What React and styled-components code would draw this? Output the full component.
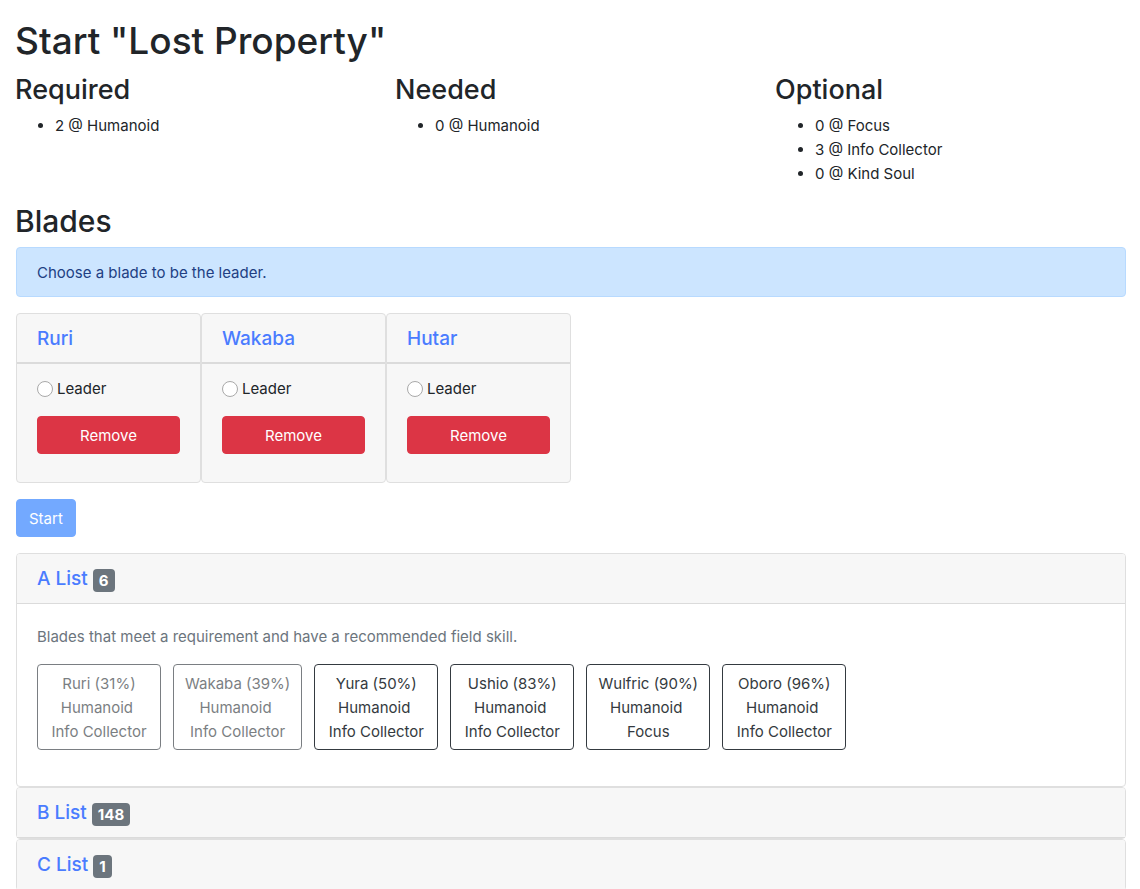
import React, { useState } from "react";
import styled, { createGlobalStyle } from "styled-components";

const GlobalStyle = createGlobalStyle`
  *, *::before, *::after { box-sizing: border-box; }
  body {
    margin: 0;
    background: #fff;
    color: #212529;
    font-family: Inter, "Liberation Sans", sans-serif;
    font-size: 15px;
    line-height: 24px;
  }
  h1, h2, h3, p, ul { margin: 0; }
  button { font: inherit; }
`;

const Page = styled.main`
  padding: 17px 14px 0 15px;
`;

const Title = styled.h1`
  font-size: 37px;
  line-height: 48px;
  font-weight: 500;
  margin-bottom: 8px;
`;

const Requirements = styled.div`
  display: grid;
  grid-template-columns: repeat(3, 1fr);
  column-gap: 15px;
  margin-right: -14px;
  margin-bottom: 16px;
`;

const GroupTitle = styled.h3`
  font-size: 27px;
  line-height: 33px;
  font-weight: 500;
  margin-bottom: 8px;
`;

const SkillList = styled.ul`
  padding-left: 40px;
`;

const SectionTitle = styled.h2`
  font-size: 30px;
  line-height: 38px;
  font-weight: 500;
  margin-bottom: 7px;
`;

const Content = styled.div`
  padding-left: 1px;
`;

const Alert = styled.div`
  padding: 13px 20px 11px;
  border: 1px solid #b8daff;
  border-radius: 4px;
  background: #cce5ff;
  color: #213f83;
  margin-bottom: 16px;
`;

const BladeCards = styled.div`
  display: flex;
  flex-wrap: wrap;
  margin-bottom: 16px;
`;

const BladeCard = styled.section`
  width: 185px;
  border: 1px solid #dfdfdf;
  border-radius: 4px;
  background: #f7f7f7;
`;

const BladeHeader = styled.header`
  padding: 13px 20px 11px;
  border-bottom: 1px solid #dbdbdb;
`;

const BladeBody = styled.div`
  padding: 13px 20px 28px;
  border-top: 1px solid #dbdbdb;
`;

const CardLink = styled.a`
  color: #4a7cff;
  font-size: 19px;
  font-weight: 500;
  text-decoration: none;
`;

const BladeName = styled.h3`
  font-size: 19px;
  line-height: 24px;
  font-weight: 500;
`;

const LeaderLabel = styled.label`
  display: flex;
  align-items: center;
  gap: 4px;
  margin-bottom: 15px;
`;

const Radio = styled.input`
  appearance: none;
  width: 16px;
  height: 16px;
  margin: 0;
  border: 1px solid #a9a9a9;
  border-radius: 50%;
  background: #fff;
  &:checked { border: 5px solid #4a7cff; }
`;

const Button = styled.button`
  display: block;
  width: ${(p) => (p.$block ? "100%" : "auto")};
  padding: 7px 12px 5px;
  border: 1px solid ${(p) => p.$color};
  border-radius: 4px;
  background: ${(p) => p.$color};
  color: #fff;
`;

const Lists = styled.div`
  margin-top: 16px;
`;

const ListCard = styled.section`
  border: 1px solid #dfdfdf;
  border-radius: 4px;
  background: #fff;
`;

const ListHeader = styled.h3`
  display: flex;
  align-items: center;
  gap: 5px;
  height: 50px;
  padding: 0 20px;
  border-bottom: 1px solid #dbdbdb;
  border-radius: 3px 3px 0 0;
  background: #f7f7f7;
`;

const Badge = styled.span`
  margin-top: 4px;
  padding: 0 6px;
  border-radius: 4px;
  background: #6c757d;
  color: #fff;
  font-size: 15px;
  line-height: 23px;
  font-weight: 700;
`;

const ListBody = styled.div`
  padding: 21px 20px 36px;
`;

const Hint = styled.p`
  color: #6c757d;
  margin-bottom: 15px;
`;

const Choices = styled.div`
  display: flex;
  flex-wrap: wrap;
  gap: 12px;
`;

const Choice = styled.button`
  min-width: 124px;
  padding: 7px 11px 5px;
  border: 1px solid #343a40;
  border-radius: 4px;
  background: transparent;
  color: #343a40;
  text-align: center;
  white-space: pre-line;
  &:disabled { opacity: 0.65; }
`;

const requirements = [
  { title: "Required", skills: ["2 @ Humanoid"] },
  { title: "Needed", skills: ["0 @ Humanoid"] },
  { title: "Optional", skills: ["0 @ Focus", "3 @ Info Collector", "0 @ Kind Soul"] },
];

const team = ["Ruri", "Wakaba", "Hutar"];

const candidates = [
  { name: "Ruri (31%)", skill: "Info Collector", taken: true },
  { name: "Wakaba (39%)", skill: "Info Collector", taken: true },
  { name: "Yura (50%)", skill: "Info Collector" },
  { name: "Ushio (83%)", skill: "Info Collector" },
  { name: "Wulfric (90%)", skill: "Focus" },
  { name: "Oboro (96%)", skill: "Info Collector" },
];

const lists = [
  { title: "A List", count: 6, open: true },
  { title: "B List", count: 148 },
  { title: "C List", count: 1 },
];

export default function App() {
  const [leader, setLeader] = useState(null);
  return (
    <>
      <GlobalStyle />
      <Page>
        <Title>Start "Lost Property"</Title>
        <Requirements>
          {requirements.map((group) => (
            <div key={group.title}>
              <GroupTitle>{group.title}</GroupTitle>
              <SkillList>
                {group.skills.map((skill) => <li key={skill}>{skill}</li>)}
              </SkillList>
            </div>
          ))}
        </Requirements>
        <SectionTitle>Blades</SectionTitle>
        <Content>
          <Alert role="alert">Choose a blade to be the leader.</Alert>
          <BladeCards>
            {team.map((name) => (
              <BladeCard key={name}>
                <BladeHeader>
                  <BladeName><CardLink href="#">{name}</CardLink></BladeName>
                </BladeHeader>
                <BladeBody>
                  <LeaderLabel>
                    <Radio
                      type="radio"
                      name="leader"
                      checked={leader === name}
                      onChange={() => setLeader(name)}
                    />
                    Leader
                  </LeaderLabel>
                  <Button type="button" $block $color="#dc3545">Remove</Button>
                </BladeBody>
              </BladeCard>
            ))}
          </BladeCards>
          <Button type="button" $color="#73a9ff" disabled={!leader}>Start</Button>
          <Lists>
            {lists.map((list) => (
              <ListCard key={list.title}>
                <ListHeader>
                  <CardLink href="#">{list.title}</CardLink>
                  <Badge>{list.count}</Badge>
                </ListHeader>
                {list.open && (
                  <ListBody>
                    <Hint>Blades that meet a requirement and have a recommended field skill.</Hint>
                    <Choices>
                      {candidates.map((c) => (
                        <Choice key={c.name} type="button" disabled={c.taken}>
                          {`${c.name}\nHumanoid\u00a0\n${c.skill}`}
                        </Choice>
                      ))}
                    </Choices>
                  </ListBody>
                )}
              </ListCard>
            ))}
          </Lists>
        </Content>
      </Page>
    </>
  );
}
